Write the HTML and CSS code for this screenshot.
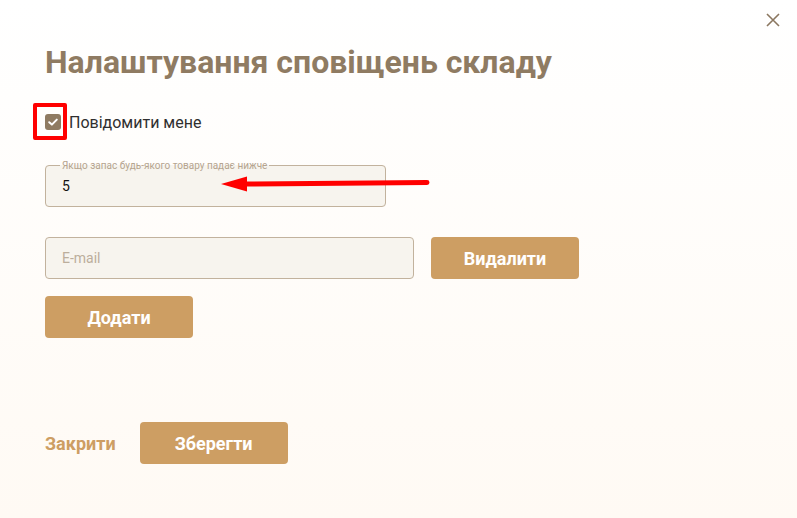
FILE: index.html
```html
<!DOCTYPE html>
<html lang="uk">
<head>
<meta charset="utf-8">
<link rel="stylesheet" href="styles.css">
</head>
<body>
<div class="dialog">
  <button class="close" aria-label="close">
    <svg width="14" height="14" viewBox="0 0 14 14"><path d="M1 1L13 13M13 1L1 13" stroke="#8b7760" stroke-width="1.6" fill="none"/></svg>
  </button>
  <h1 class="title">Налаштування сповіщень складу</h1>
  <label class="check-row">
    <span class="checkbox">
      <svg width="16" height="16" viewBox="0 0 16 16"><path d="M4.2 8.2L6.9 10.6L11.8 5.6" stroke="#fff" stroke-width="2" fill="none" stroke-linecap="round" stroke-linejoin="round"/></svg>
    </span>
    <span class="check-label">Повідомити мене</span>
    <span class="mark-box"></span>
  </label>
  <fieldset class="field threshold">
    <legend>Якщо запас будь-якого товару падає нижче</legend>
    <span class="value">5</span>
  </fieldset>
  <div class="email-row">
    <div class="field email"><span class="placeholder">E-mail</span></div>
    <button class="btn">Видалити</button>
  </div>
  <div class="add-row">
    <button class="btn">Додати</button>
  </div>
  <div class="footer">
    <button class="link">Закрити</button>
    <button class="btn">Зберегти</button>
  </div>
  <svg class="arrow" width="214" height="18" viewBox="0 0 214 18">
    <path d="M208 7.5L26 9" stroke="#ff0000" stroke-width="5" stroke-linecap="round" fill="none"/>
    <path d="M2 9L28 1.5L28 16.5Z" fill="#ff0000"/>
  </svg>
</div>
</body>
</html>
```
FILE: styles.css
```css
* { box-sizing: border-box; }
html, body { margin: 0; height: 100%; }
body {
  font-family: Roboto, "Noto Sans", sans-serif;
  background: linear-gradient(to bottom, #ffffff 0%, #fffaf4 100%);
}
.dialog {
  position: relative;
  height: 518px;
  padding: 40px 0 0 45px;
}
.close {
  position: absolute;
  top: 13px;
  left: 766px;
  border: 0;
  background: none;
  padding: 0;
  width: 14px;
  height: 14px;
  display: flex;
}
.title {
  margin: 0;
  font-size: 32px;
  font-weight: 700;
  color: #8f7b62;
  line-height: 45px;
}
.check-row {
  position: relative;
  display: flex;
  align-items: center;
  gap: 8px;
  margin-top: 27px;
  height: 20px;
}
.checkbox {
  width: 16px;
  height: 16px;
  border-radius: 3px;
  background: #8f7b62;
  display: flex;
}
.check-label {
  font-size: 16px;
  color: #2f2f2f;
}
.mark-box {
  position: absolute;
  left: -12px;
  top: -9px;
  width: 34px;
  height: 37px;
  border: 4px solid #ff0000;
  border-radius: 2px;
}
.field {
  border: 1px solid #c2b29d;
  border-radius: 4px;
  background: #f7f4ee;
  height: 42px;
}
.threshold {
  margin: 29px 0 0 0;
  width: 341px;
  height: 46px;
  padding: 0 16px;
  display: flex;
  align-items: center;
}
.threshold legend {
  font-size: 10px;
  color: #b5a48f;
  padding: 0 2px;
  margin-left: -2px;
  line-height: 9px;
}
.value {
  font-size: 14px;
  color: #111;
  margin-top: -4px;
}
.email-row {
  display: flex;
  gap: 17px;
  margin-top: 30px;
}
.email {
  width: 369px;
  display: flex;
  align-items: center;
  padding: 0 16px;
}
.placeholder {
  font-size: 14px;
  color: #bcae9c;
}
.btn {
  border: 0;
  border-radius: 4px;
  background: #cd9e63;
  color: #fff;
  font-family: Roboto, "Noto Sans", sans-serif;
  font-weight: 700;
  font-size: 18px;
  width: 148px;
  height: 42px;
  padding: 0;
}
.add-row { margin-top: 17px; }
.footer {
  display: flex;
  align-items: center;
  gap: 24px;
  margin-top: 84px;
}
.link {
  border: 0;
  background: none;
  padding: 0;
  font-family: Roboto, "Noto Sans", sans-serif;
  font-weight: 700;
  font-size: 18px;
  color: #cd9e63;
}
.arrow {
  position: absolute;
  left: 219px;
  top: 175px;
}
```
